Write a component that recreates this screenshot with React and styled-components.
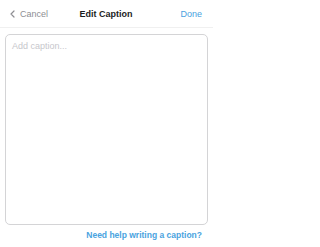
import React from "react";
import styled, { createGlobalStyle } from "styled-components";

const Global = createGlobalStyle`
  html, body { margin: 0; padding: 0; background: #fff; }
  body { font-family: "Liberation Sans", Arial, sans-serif; -webkit-font-smoothing: antialiased; }
  * { box-sizing: border-box; }
`;

const Page = styled.div`
  width: 213px;
  height: 247px;
  display: flex;
  flex-direction: column;
  background: #fff;
`;

const Header = styled.div`
  height: 28px;
  display: grid;
  grid-template-columns: 1fr auto 1fr;
  align-items: center;
  padding: 0 11px 0 10px;
  border-bottom: 1px solid #f0f0f0;
`;

const Cancel = styled.button`
  justify-self: start;
  display: flex;
  align-items: center;
  gap: 5px;
  background: none;
  border: 0;
  padding: 0;
  font: 9px "Liberation Sans", Arial, sans-serif;
  color: #8e8e93;
`;

const Title = styled.div`
  font: bold 9px "Liberation Sans", Arial, sans-serif;
  color: #1c1c1e;
`;

const Done = styled.button`
  justify-self: end;
  background: none;
  border: 0;
  padding: 0;
  font: 9px "Liberation Sans", Arial, sans-serif;
  color: #4a9fe0;
`;

const Body = styled.div`
  flex: 1;
  display: flex;
  flex-direction: column;
  padding: 6px 5px 0 5px;
`;

const Caption = styled.textarea`
  height: 191px;
  border: 1.5px solid #d4d4d6;
  border-radius: 5px;
  padding: 6px 6px;
  resize: none;
  outline: none;
  font: 9px "Liberation Sans", Arial, sans-serif;
  color: #333;
  &::placeholder { color: #c7c7cc; }
`;

const HelpRow = styled.div`
  display: flex;
  justify-content: flex-end;
  padding: 5px 6px 0 0;
`;

const HelpLink = styled.a`
  font: bold 8.5px "Liberation Sans", Arial, sans-serif;
  color: #4aa3e0;
  text-decoration: none;
`;

export default function App() {
  return (
    <Page>
      <Global />
      <Header>
        <Cancel>
          <svg width="5" height="8" viewBox="0 0 5 8">
            <path d="M4 1 L1 4 L4 7" fill="none" stroke="#8e8e93" strokeWidth="1.2" strokeLinecap="round" strokeLinejoin="round" />
          </svg>
          Cancel
        </Cancel>
        <Title>Edit Caption</Title>
        <Done>Done</Done>
      </Header>
      <Body>
        <Caption placeholder="Add caption..." />
        <HelpRow>
          <HelpLink href="#">Need help writing a caption?</HelpLink>
        </HelpRow>
      </Body>
    </Page>
  );
}
